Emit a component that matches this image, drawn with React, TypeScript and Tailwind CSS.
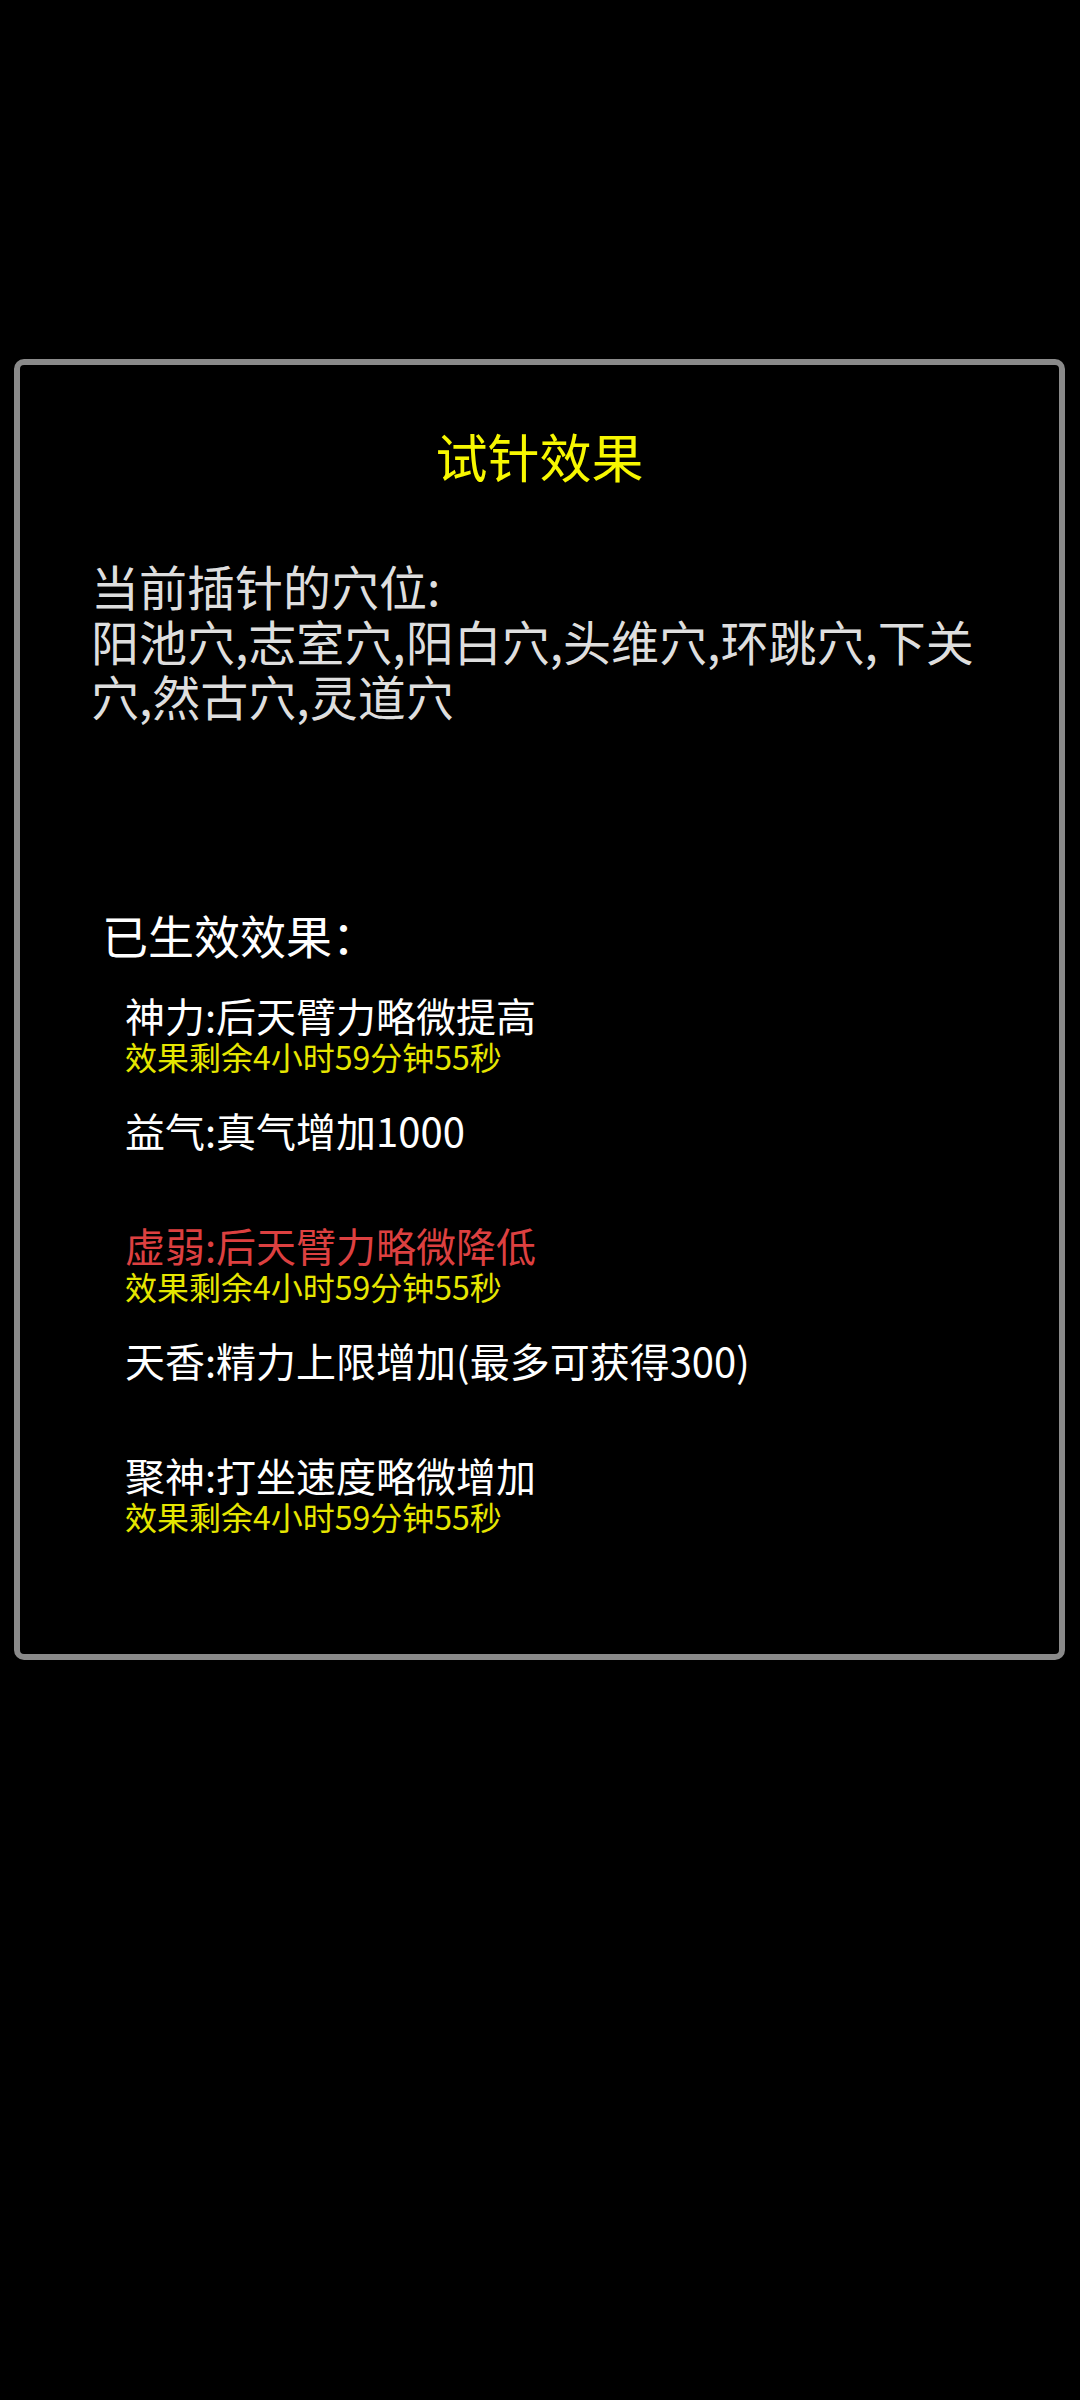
import React from "react";

type Item = { main: string; sub?: string; red?: boolean };

const items: Item[] = [
  { main: "神力:后天臂力略微提高", sub: "效果剩余4小时59分钟55秒" },
  { main: "益气:真气增加1000" },
  { main: "虚弱:后天臂力略微降低", sub: "效果剩余4小时59分钟55秒", red: true },
  { main: "天香:精力上限增加(最多可获得300)" },
  { main: "聚神:打坐速度略微增加", sub: "效果剩余4小时59分钟55秒" },
];

export default function App() {
  return (
    <div
      className="min-h-[2400px] w-[1080px] bg-black pt-[359px]"
      style={{ fontFamily: '"Noto Sans CJK SC", "Noto Sans", sans-serif' }}
    >
      <div className="ml-[14px] flex h-[1301px] w-[1051px] flex-col rounded-[10px] border-[6px] border-[#8a8a8a] bg-black">
        <div className="mt-[61px] text-center text-[52px] leading-[60px] text-[#f7f700]">
          试针效果
        </div>
        <div className="mt-[72px] pl-[71px] pr-[71px] text-[48px] leading-[55px] text-[#dedede]">
          当前插针的穴位:
          <br />
          阳池穴,志室穴,阳白穴,头维穴,环跳穴,下关穴,然古穴,灵道穴
        </div>
        <div className="mt-[184px] pl-[82px] text-[46px] leading-[54px] text-white">
          已生效效果：
        </div>
        <div className="mt-[31px] flex flex-col pl-[105px]">
          {items.map((it, i) => (
            <div key={i} className="flex h-[115px] flex-col">
              <div
                className={
                  it.red
                    ? "text-[40px] leading-[46px] text-[#dd4040]"
                    : "text-[40px] leading-[46px] text-white"
                }
              >
                {it.main}
              </div>
              {it.sub && (
                <div className="text-[32px] leading-[36px] text-[#e6e600]">{it.sub}</div>
              )}
            </div>
          ))}
        </div>
      </div>
    </div>
  );
}
